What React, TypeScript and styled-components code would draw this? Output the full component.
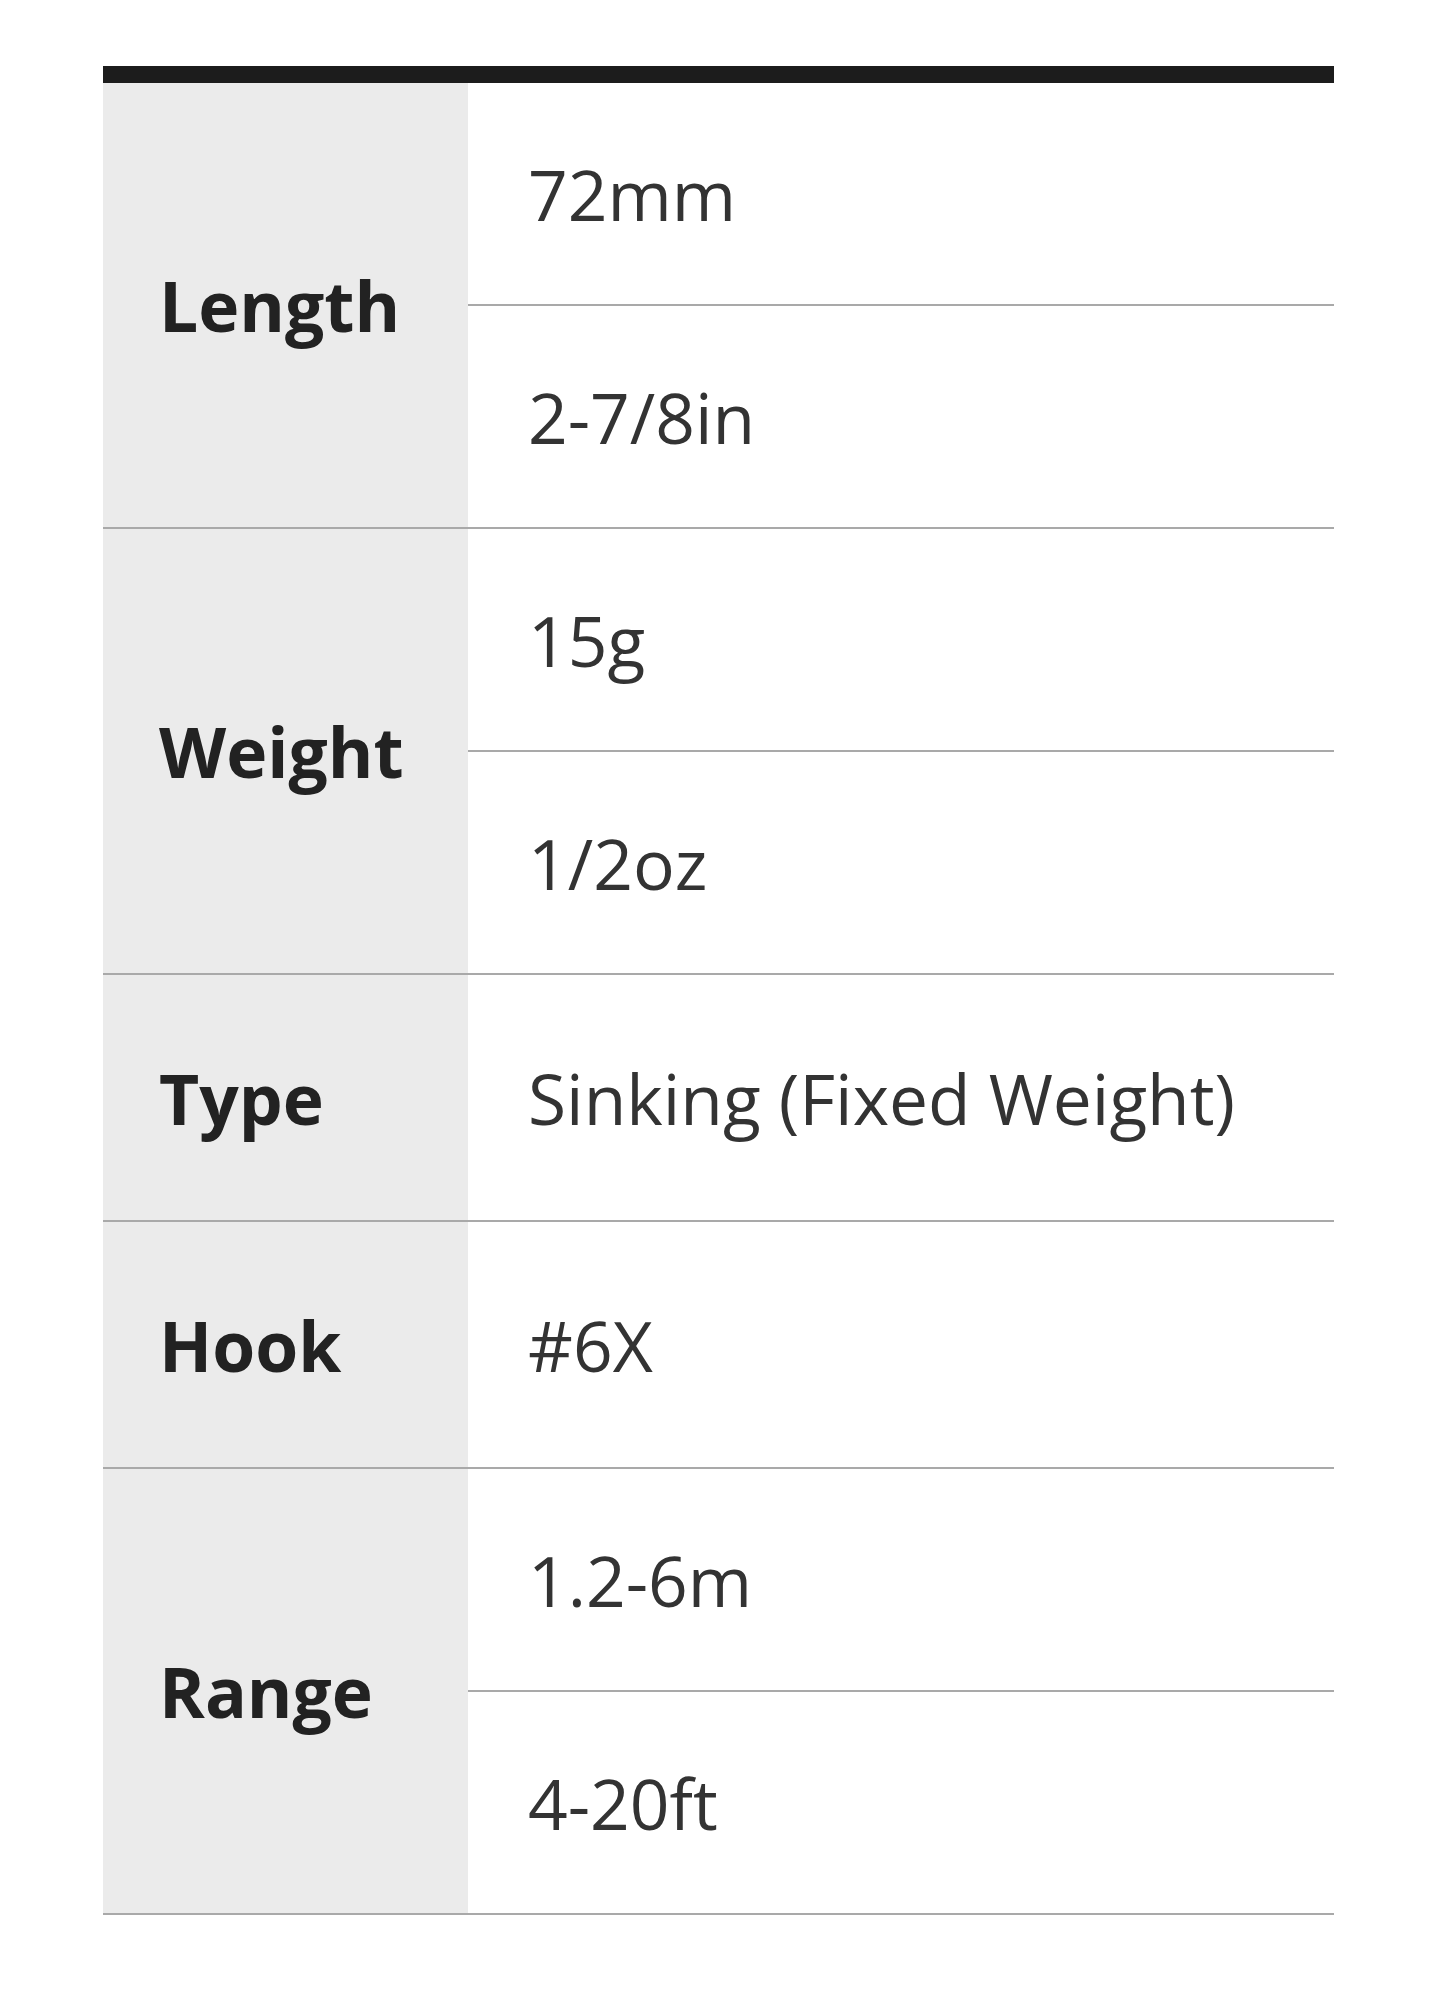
import React from "react";
import styled, { createGlobalStyle } from "styled-components";

const GlobalStyle = createGlobalStyle`
  html, body {
    margin: 0;
    padding: 0;
    background: #ffffff;
  }
  body {
    font-family: "Open Sans", "Noto Sans", sans-serif;
  }
`;

const Page = styled.div`
  padding: 66px 113px 80px 103px;
`;

const SpecTable = styled.div`
  width: 1231px;
  border-top: 17px solid #1c1c1c;
  display: flex;
  flex-direction: column;
`;

const Group = styled.div`
  display: grid;
  grid-template-columns: 365px 1fr;
  border-bottom: 2px solid #a9a9a9;
`;

const Label = styled.div`
  background: #ebebeb;
  display: flex;
  align-items: center;
  padding-left: 56px;
  font-size: 69.5px;
  font-weight: 700;
  color: #222222;
`;

const Values = styled.div`
  display: flex;
  flex-direction: column;
`;

const Value = styled.div<{ $tall?: boolean }>`
  height: ${(p) => (p.$tall ? 245 : 221)}px;
  display: flex;
  align-items: center;
  padding-left: 60px;
  font-size: 69.5px;
  font-weight: 400;
  color: #333333;
  & + & {
    border-top: 2px solid #a9a9a9;
  }
`;

const specs: { label: string; values: string[] }[] = [
  { label: "Length", values: ["72mm", "2-7/8in"] },
  { label: "Weight", values: ["15g", "1/2oz"] },
  { label: "Type", values: ["Sinking (Fixed Weight)"] },
  { label: "Hook", values: ["#6X"] },
  { label: "Range", values: ["1.2-6m", "4-20ft"] },
];

export default function App() {
  return (
    <>
      <GlobalStyle />
      <Page>
        <SpecTable>
          {specs.map((s) => (
            <Group key={s.label}>
              <Label>{s.label}</Label>
              <Values>
                {s.values.map((v) => (
                  <Value key={v} $tall={s.values.length === 1}>
                    {v}
                  </Value>
                ))}
              </Values>
            </Group>
          ))}
        </SpecTable>
      </Page>
    </>
  );
}
